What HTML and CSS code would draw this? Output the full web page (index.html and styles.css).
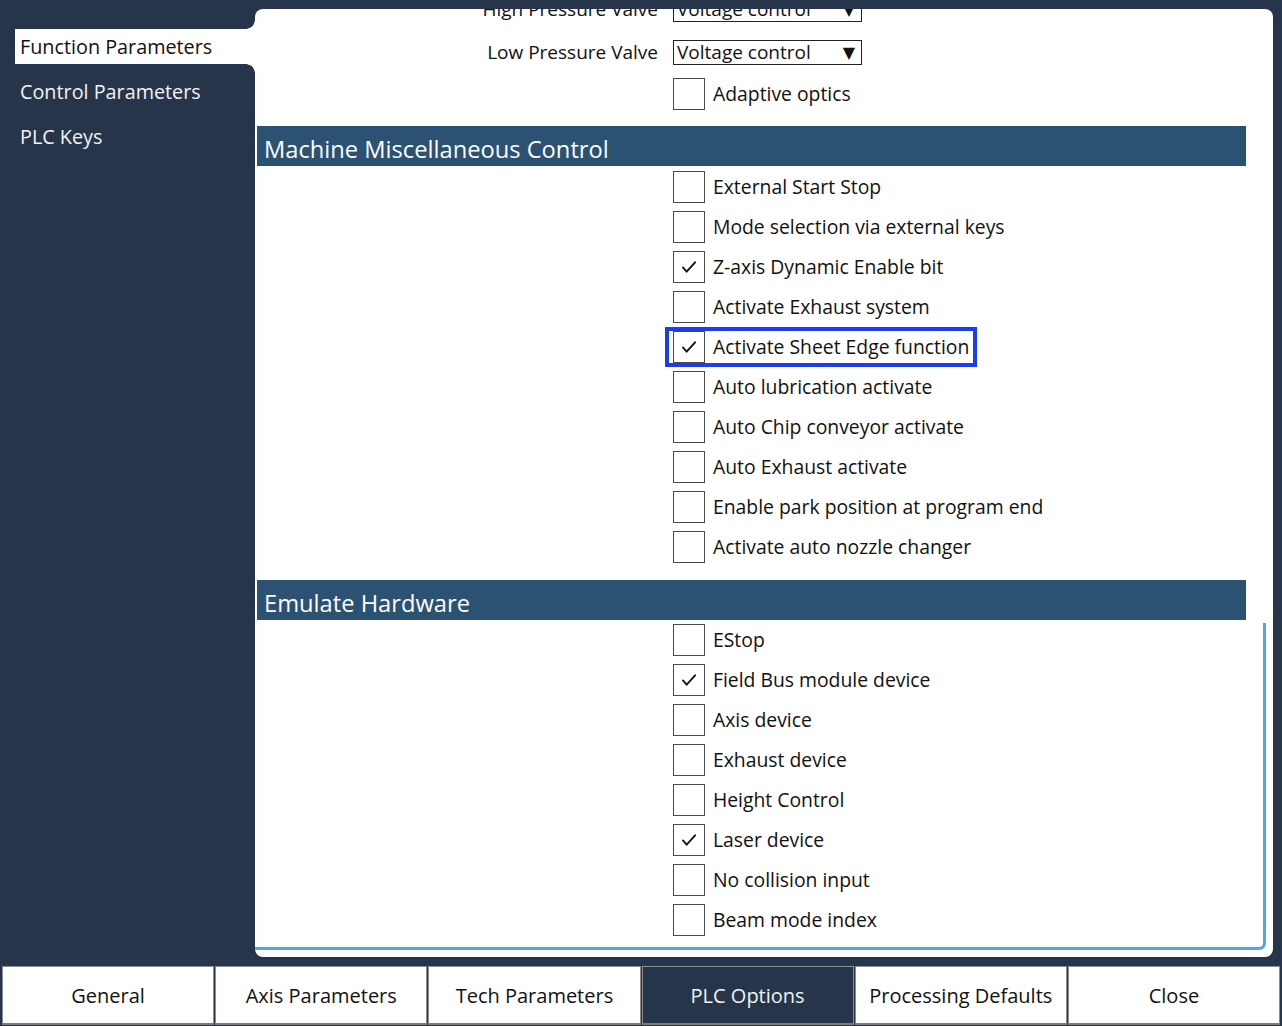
FILE: index.html
```html
<!DOCTYPE html>
<html lang="en">
<head>
<meta charset="utf-8">
<title>PLC Options</title>
<link rel="stylesheet" href="styles.css">
</head>
<body>
<div class="app">
  <div class="main">
    <nav class="sidebar">
      <div class="nav-item active">Function Parameters</div>
      <div class="nav-item">Control Parameters</div>
      <div class="nav-item">PLC Keys</div>
    </nav>
    <section class="panel">
      <div class="content">
        <div class="select-row">
          <span class="row-label">High Pressure Valve</span>
          <div class="select"><span>Voltage control</span><span class="arrow">▼</span></div>
        </div>
        <div class="select-row">
          <span class="row-label">Low Pressure Valve</span>
          <div class="select"><span>Voltage control</span><span class="arrow">▼</span></div>
        </div>
        <div class="check-row">
          <span class="box"></span><span class="check-label">Adaptive optics</span>
        </div>

        <h2 class="section-header">Machine Miscellaneous Control</h2>
        <div class="section-body">
          <div class="check-row"><span class="box"></span><span class="check-label">External Start Stop</span></div>
          <div class="check-row"><span class="box"></span><span class="check-label">Mode selection via external keys</span></div>
          <div class="check-row"><span class="box checked"><svg viewBox="0 0 32 32"><polyline points="9.5,16.5 13.5,21 22.5,11"/></svg></span><span class="check-label">Z-axis Dynamic Enable bit</span></div>
          <div class="check-row"><span class="box"></span><span class="check-label">Activate Exhaust system</span></div>
          <div class="check-row"><span class="highlight"><span class="box checked"><svg viewBox="0 0 32 32"><polyline points="9.5,16.5 13.5,21 22.5,11"/></svg></span><span class="check-label">Activate Sheet Edge function</span></span></div>
          <div class="check-row"><span class="box"></span><span class="check-label">Auto lubrication activate</span></div>
          <div class="check-row"><span class="box"></span><span class="check-label">Auto Chip conveyor activate</span></div>
          <div class="check-row"><span class="box"></span><span class="check-label">Auto Exhaust activate</span></div>
          <div class="check-row"><span class="box"></span><span class="check-label">Enable park position at program end</span></div>
          <div class="check-row"><span class="box"></span><span class="check-label">Activate auto nozzle changer</span></div>
        </div>

        <h2 class="section-header section-header--second">Emulate Hardware</h2>
        <div class="section-body section-body--framed">
          <div class="check-row"><span class="box"></span><span class="check-label">EStop</span></div>
          <div class="check-row"><span class="box checked"><svg viewBox="0 0 32 32"><polyline points="9.5,16.5 13.5,21 22.5,11"/></svg></span><span class="check-label">Field Bus module device</span></div>
          <div class="check-row"><span class="box"></span><span class="check-label">Axis device</span></div>
          <div class="check-row"><span class="box"></span><span class="check-label">Exhaust device</span></div>
          <div class="check-row"><span class="box"></span><span class="check-label">Height Control</span></div>
          <div class="check-row"><span class="box checked"><svg viewBox="0 0 32 32"><polyline points="9.5,16.5 13.5,21 22.5,11"/></svg></span><span class="check-label">Laser device</span></div>
          <div class="check-row"><span class="box"></span><span class="check-label">No collision input</span></div>
          <div class="check-row"><span class="box"></span><span class="check-label">Beam mode index</span></div>
        </div>
      </div>
    </section>
  </div>
  <div class="tabs">
    <div class="tab">General</div>
    <div class="tab">Axis Parameters</div>
    <div class="tab">Tech Parameters</div>
    <div class="tab active">PLC Options</div>
    <div class="tab">Processing Defaults</div>
    <div class="tab">Close</div>
  </div>
</div>
</body>
</html>
```
FILE: styles.css
```css
* { box-sizing: border-box; }

html, body {
  margin: 0;
  padding: 0;
}

body {
  width: 1282px;
  height: 1026px;
  overflow: hidden;
  background: #263549;
  font-family: "Open Sans", "Noto Sans", "Liberation Sans", sans-serif;
  color: #111;
}

.app {
  display: flex;
  flex-direction: column;
  height: 1026px;
}

.main {
  display: flex;
  height: 966px;
  padding-top: 9px;
}

/* Sidebar */
.sidebar {
  width: 255px;
  flex: none;
  padding-top: 20px;
  display: flex;
  flex-direction: column;
  gap: 10px;
}

.nav-item {
  margin-left: 15px;
  height: 35px;
  line-height: 35px;
  padding-left: 5px;
  font-size: 19.8px;
  color: #f3f3f3;
  white-space: nowrap;
}

.nav-item.active {
  position: relative;
  background: #fff;
  color: #111;
}

.nav-item.active::before,
.nav-item.active::after {
  content: "";
  position: absolute;
  right: 0;
  width: 9px;
  height: 9px;
}

.nav-item.active::before {
  top: -9px;
  background: radial-gradient(circle at 0 0, transparent 8.5px, #fff 9px);
}

.nav-item.active::after {
  bottom: -9px;
  background: radial-gradient(circle at 0 100%, transparent 8.5px, #fff 9px);
}

/* Panel */
.panel {
  width: 1018px;
  height: 948px;
  flex: none;
  background: #fff;
  border-radius: 8px;
  overflow: hidden;
}

.content {
  margin-top: -18px;
  font-size: 19px;
}

.select-row {
  display: flex;
  align-items: flex-start;
  height: 43px;
  padding-top: 6px;
}

.row-label {
  width: 418px;
  padding-right: 15px;
  text-align: right;
  line-height: 25px;
  white-space: nowrap;
}

.select {
  width: 189px;
  height: 25px;
  border: 1px solid #222;
  display: flex;
  justify-content: space-between;
  align-items: center;
  padding: 0 6px 0 3px;
  line-height: 23px;
}

.arrow {
  font-size: 16px;
  font-family: "DejaVu Sans", sans-serif;
}

.check-row {
  display: flex;
  align-items: flex-start;
  height: 40px;
  padding-top: 1px;
  padding-left: 418px;
}

.box {
  width: 32px;
  height: 32px;
  flex: none;
  border: 1px solid #4a4a4a;
  background: #fff;
  display: flex;
}

.box svg {
  width: 30px;
  height: 30px;
}

.box polyline {
  fill: none;
  stroke: #111;
  stroke-width: 2;
  stroke-linecap: round;
  stroke-linejoin: round;
}

.check-label {
  margin-left: 8px;
  line-height: 32px;
  font-size: 19.35px;
  white-space: nowrap;
}

.highlight {
  display: inline-flex;
  align-items: flex-start;
  margin-left: -4px;
  padding: 0 4px;
  height: 32px;
  outline: 4px solid #1a3ded;
}

/* Section headers */
.section-header {
  margin: 9px 0 4px 2px;
  width: 989px;
  height: 40px;
  overflow: hidden;
  padding: 3px 0 0 7px;
  background: #2b5273;
  color: #fff;
  font-weight: normal;
  font-size: 23.7px;
  line-height: 40px;
}

.section-header--second {
  margin-top: 10px;
  margin-bottom: 3px;
}

.section-body--framed {
  width: 1011px;
  padding-bottom: 4px;
  border-right: 3px solid #52a4e8;
  border-bottom: 3px solid #52a4e8;
  border-bottom-right-radius: 7px;
}

/* Bottom tabs */
.tabs {
  display: flex;
  gap: 1px;
  height: 60px;
  padding: 0 2px 1px 2px;
}

.tab {
  flex: 1;
  background: #fff;
  border: 1px solid #8c8c8c;
  border-bottom: 2px solid #7a7a7a;
  display: flex;
  align-items: center;
  justify-content: center;
  font-size: 20px;
  color: #111;
  white-space: nowrap;
}

.tab.active {
  background: #263549;
  color: #f3f3f3;
}
```
